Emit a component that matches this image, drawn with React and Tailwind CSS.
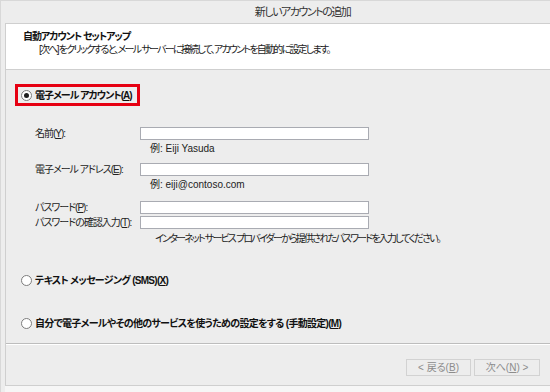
import React from 'react';

// 新しいアカウントの追加 ダイアログ
const font = "font-['Liberation_Sans','Noto_Sans_CJK_JP',sans-serif] [font-feature-settings:'palt']";

function Radio({ checked }) {
  return (
    <span className="flex h-[11px] w-[11px] shrink-0 items-center justify-center rounded-full border border-[#7d7d7d] bg-white">
      {checked && <span className="h-[5px] w-[5px] rounded-full bg-[#1e1e1e]" />}
    </span>
  );
}

function Field({ label, keyChar, className = '' }) {
  return (
    <div className={`flex h-[13px] items-center ${className}`}>
      <div className="w-[105px] whitespace-nowrap text-[10px] leading-[13px] tracking-[-1px] text-[#222]">
        {label}(<u>{keyChar}</u>):
      </div>
      <div className="h-[13px] w-[229px] border border-[#a9abb2] bg-white" />
    </div>
  );
}

function Hint({ children, className = '' }) {
  return <div className={`h-[13px] whitespace-nowrap text-[10px] leading-[13px] text-[#222] ${className}`}>{children}</div>;
}

export default function App() {
  return (
    <div className={`flex h-[392px] w-[550px] flex-col overflow-hidden border-l border-t border-[#d8d8d8] bg-[#ededed] pl-[4px] ${font}`}>
      {/* タイトル */}
      <div className="flex h-[22px] shrink-0 items-center justify-center pl-[50px] text-[11px] tracking-[-1.5px] text-[#333]">
        新しいアカウントの追加
      </div>

      <div className="flex h-[363px] shrink-0 flex-col border-b border-l border-t border-[#cfcfcf]">
        {/* ヘッダー */}
        <div className="h-[46px] shrink-0 border-b border-[#cfcfcf] bg-white pl-[17px] pt-[6px]">
          <div className="text-[10px] font-bold leading-[13px] tracking-[-1.05px] text-[#111]">自動アカウント セットアップ</div>
          <div className="whitespace-nowrap pl-[16px] text-[10px] leading-[13px] tracking-[-1.75px] text-[#222]">
            [次へ] をクリックすると、メール サーバーに接続して、アカウントを自動的に設定します。
          </div>
        </div>

        {/* 本体 */}
        <div className="flex flex-1 flex-col">
          <div className="ml-[9px] mt-[14px] flex h-[22px] w-[125px] items-center gap-[3px] border-[3px] border-[#e60012] pl-[3px]">
            <Radio checked />
            <span className="whitespace-nowrap text-[10px] font-bold leading-[13px] tracking-[-1px] text-[#111]">
              電子メール アカウント(<u>A</u>)
            </span>
          </div>

          <div className="ml-[29px]">
            <Field label="名前" keyChar="Y" className="mt-[21px]" />
            <Hint className="mt-[2px] pl-[115px]">例: Eiji Yasuda</Hint>
            <Field label="電子メール アドレス" keyChar="E" className="mt-[8px]" />
            <Hint className="mt-[2px] pl-[115px]">例: eiji@contoso.com</Hint>
            <Field label="パスワード" keyChar="P" className="mt-[10px]" />
            <Field label="パスワードの確認入力" keyChar="T" className="mt-[2px]" />
            <Hint className="mt-[3px] pl-[120px] tracking-[-1.8px]">
              インターネット サービス プロバイダーから提供されたパスワードを入力してください。
            </Hint>
          </div>

          <div className="ml-[15px] mt-[29px] flex h-[13px] items-center gap-[3px]">
            <Radio />
            <span className="whitespace-nowrap text-[10px] font-bold leading-[13px] tracking-[-0.7px] text-[#111]">
              テキスト メッセージング (SMS)(<u>X</u>)
            </span>
          </div>
          <div className="ml-[15px] mt-[30px] flex h-[13px] items-center gap-[3px]">
            <Radio />
            <span className="whitespace-nowrap text-[10px] font-bold leading-[13px] tracking-[-0.7px] text-[#111]">
              自分で電子メールやその他のサービスを使うための設定をする (手動設定)(<u>M</u>)
            </span>
          </div>

          {/* 区切り線とボタン */}
          <div className="mt-[13px] border-b border-t border-b-white border-t-[#bdbdbd]" />
          <div className="mt-[14px] flex justify-end gap-[3px] pr-[10px]">
            <button className="h-[17px] w-[65px] border border-[#d2d2d2] bg-[#ededed] text-[10px] leading-[15px] text-[#8c8c8c]">
              &lt; 戻る(<u>B</u>)
            </button>
            <button className="h-[17px] w-[66px] border border-[#d2d2d2] bg-[#ededed] text-[10px] leading-[15px] text-[#8c8c8c]">
              次へ(<u>N</u>) &gt;
            </button>
          </div>
        </div>
      </div>
      <div className="flex-1 bg-[#f6f6f6]" />
    </div>
  );
}
